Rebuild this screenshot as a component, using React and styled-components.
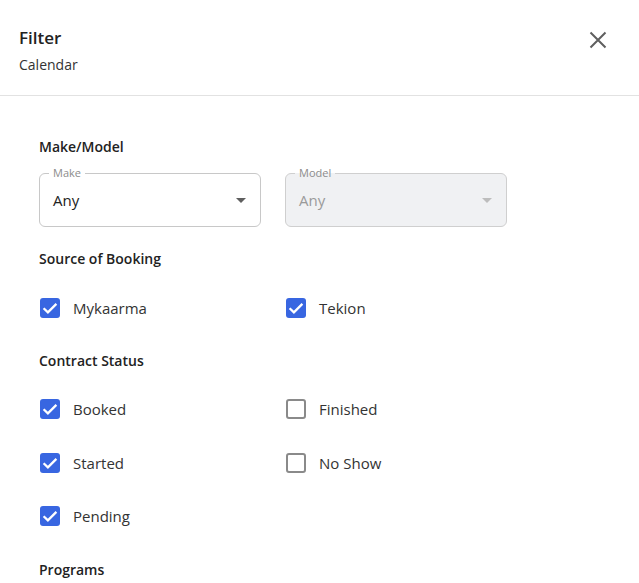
import React from "react";
import styled, { createGlobalStyle } from "styled-components";

const GlobalStyle = createGlobalStyle`
  body {
    margin: 0;
    background: #fff;
    font-family: "Open Sans", "Noto Sans", sans-serif;
    color: #262626;
  }
`;

const Panel = styled.div`
  width: 639px;
  background: #fff;
`;

const Header = styled.div`
  display: flex;
  justify-content: space-between;
  align-items: flex-start;
  padding: 26px 19px 20px;
  border-bottom: 1px solid #e2e2e2;
`;

const Title = styled.h2`
  margin: 0;
  font-size: 17px;
  line-height: 24px;
  font-weight: 600;
  color: #222;
`;

const Subtitle = styled.div`
  margin-top: 5px;
  font-size: 14px;
  line-height: 20px;
  color: #333;
`;

const CloseButton = styled.button`
  border: none;
  background: none;
  padding: 0;
  margin: 4px 12px 0 0;
  width: 20px;
  height: 20px;
  display: flex;
  align-items: center;
  justify-content: center;
  cursor: pointer;
`;

const Body = styled.div`
  padding: 41px 39px 0;
`;

const Section = styled.div`
  margin-bottom: ${(p) => p.$after || 15}px;
`;

const SectionTitle = styled.div`
  font-size: 14px;
  line-height: 20px;
  font-weight: 600;
  color: #222;
  margin-bottom: ${(p) => p.$gap || 12}px;
`;

const Grid = styled.div`
  display: grid;
  grid-template-columns: 222px 222px;
  column-gap: 24px;
`;

const SelectBox = styled.div`
  position: relative;
  height: 54px;
  box-sizing: border-box;
  border: 1px solid ${(p) => (p.$disabled ? "#cfcfcf" : "#c8c8c8")};
  border-radius: 6px;
  background: ${(p) => (p.$disabled ? "#f0f1f3" : "#fff")};
  display: flex;
  align-items: center;
  justify-content: space-between;
  padding: 0 14px 0 13px;
`;

const FloatLabel = styled.span`
  position: absolute;
  top: -8px;
  left: 9px;
  padding: 0 4px;
  font-size: 11px;
  line-height: 14px;
  color: #8c8c8c;
  background: ${(p) =>
    p.$disabled ? "linear-gradient(#fff 50%, #f0f1f3 50%)" : "#fff"};
`;

const SelectValue = styled.span`
  font-size: 15px;
  color: ${(p) => (p.$disabled ? "#9a9a9a" : "#222")};
`;

const Caret = styled.span`
  width: 0;
  height: 0;
  border-left: 5px solid transparent;
  border-right: 5px solid transparent;
  border-top: 5px solid ${(p) => (p.$disabled ? "#bdbdbd" : "#5f5f5f")};
`;

const CheckRow = styled.label`
  display: flex;
  align-items: center;
  height: 53.5px;
  cursor: pointer;
`;

const Box = styled.span`
  width: 20px;
  height: 20px;
  margin-left: 1px;
  box-sizing: border-box;
  border-radius: 3px;
  display: flex;
  align-items: center;
  justify-content: center;
  background: ${(p) => (p.$checked ? "#3866e1" : "#fff")};
  border: ${(p) => (p.$checked ? "none" : "2px solid #8a8a8a")};
`;

const CheckLabel = styled.span`
  margin-left: 13px;
  font-size: 15px;
  color: #333;
`;

const Select = ({ label, value, disabled }) => (
  <SelectBox $disabled={disabled}>
    <FloatLabel $disabled={disabled}>{label}</FloatLabel>
    <SelectValue $disabled={disabled}>{value}</SelectValue>
    <Caret $disabled={disabled} />
  </SelectBox>
);

const Checkbox = ({ label, checked }) => (
  <CheckRow>
    <Box $checked={checked}>
      {checked && (
        <svg width="20" height="20" viewBox="0 0 20 20" fill="none">
          <path
            d="M3.6 10.2 7.9 14.4 16.4 5.9"
            stroke="#fff"
            strokeWidth="2.3"
          />
        </svg>
      )}
    </Box>
    <CheckLabel>{label}</CheckLabel>
  </CheckRow>
);

const sources = [
  { label: "Mykaarma", checked: true },
  { label: "Tekion", checked: true },
];

const statuses = [
  { label: "Booked", checked: true },
  { label: "Finished", checked: false },
  { label: "Started", checked: true },
  { label: "No Show", checked: false },
  { label: "Pending", checked: true },
];

export default function App() {
  return (
    <>
      <GlobalStyle />
      <Panel>
        <Header>
          <div>
            <Title>Filter</Title>
            <Subtitle>Calendar</Subtitle>
          </div>
          <CloseButton aria-label="Close">
            <svg width="18" height="18" viewBox="0 0 18 18">
              <path
                d="M1.5 1.5 16.5 16.5M16.5 1.5 1.5 16.5"
                stroke="#5f5f5f"
                strokeWidth="2"
              />
            </svg>
          </CloseButton>
        </Header>
        <Body>
          <Section $after={22}>
            <SectionTitle $gap={16}>Make/Model</SectionTitle>
            <Grid>
              <Select label="Make" value="Any" />
              <Select label="Model" value="Any" disabled />
            </Grid>
          </Section>
          <Section $after={16}>
            <SectionTitle>Source of Booking</SectionTitle>
            <Grid>
              {sources.map((s) => (
                <Checkbox key={s.label} {...s} />
              ))}
            </Grid>
          </Section>
          <Section $after={17}>
            <SectionTitle>Contract Status</SectionTitle>
            <Grid>
              {statuses.map((s) => (
                <Checkbox key={s.label} {...s} />
              ))}
            </Grid>
          </Section>
          <Section>
            <SectionTitle>Programs</SectionTitle>
          </Section>
        </Body>
      </Panel>
    </>
  );
}
